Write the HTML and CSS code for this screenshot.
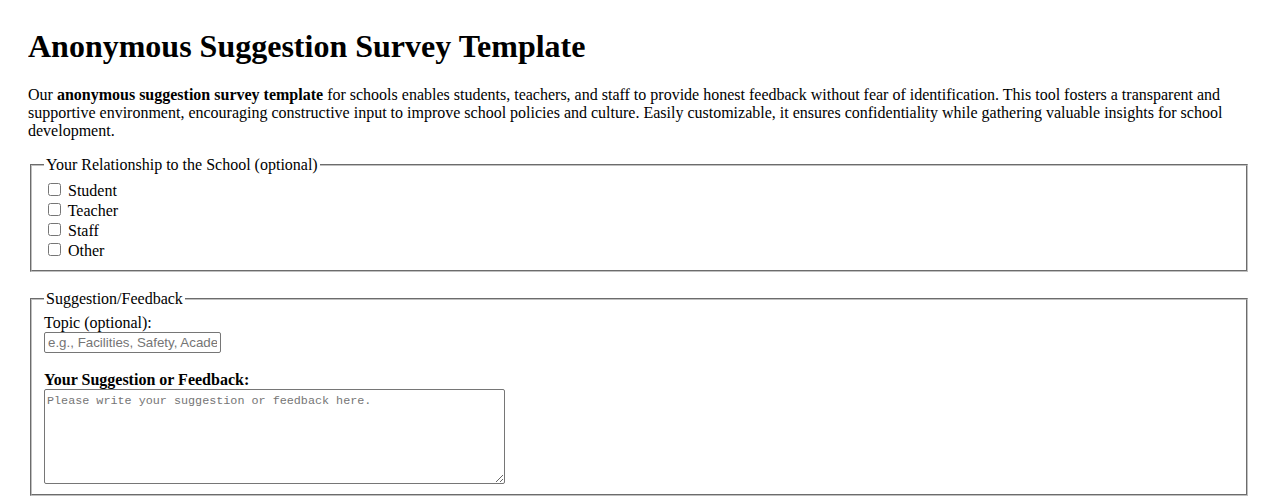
FILE: index.html
```html
<!DOCTYPE html>
<html lang="en">
<head>
<meta charset="utf-8">
<title>Anonymous Suggestion Survey Template</title>
<link rel="stylesheet" href="styles.css">
</head>
<body class="page">
<h1 class="title">Anonymous Suggestion Survey Template</h1>
<p class="intro">Our <strong>anonymous suggestion survey template</strong> for schools enables students, teachers, and staff to provide honest feedback without fear of identification. This tool fosters a transparent and supportive environment, encouraging constructive input to improve school policies and culture. Easily customizable, it ensures confidentiality while gathering valuable insights for school development.</p>
<form class="survey">
  <fieldset class="group">
    <legend class="group-legend">Your Relationship to the School (optional)</legend>
    <label class="check"><input type="checkbox" class="check-box" name="role" value="student"> Student</label><br>
    <label class="check"><input type="checkbox" class="check-box" name="role" value="teacher"> Teacher</label><br>
    <label class="check"><input type="checkbox" class="check-box" name="role" value="staff"> Staff</label><br>
    <label class="check"><input type="checkbox" class="check-box" name="role" value="other"> Other</label>
  </fieldset>
  <fieldset class="group group-feedback">
    <legend class="group-legend">Suggestion/Feedback</legend>
    <label class="field-label" for="topic">Topic (optional):</label><br>
    <input type="text" id="topic" class="text-input" placeholder="e.g., Facilities, Safety, Academics"><br><br>
    <label class="field-label field-label-strong" for="feedback">Your Suggestion or Feedback:</label><br>
    <textarea id="feedback" class="text-area" placeholder="Please write your suggestion or feedback here."></textarea>
  </fieldset>
</form>
</body>
</html>
```

FILE: styles.css
```css
.page {
  margin: 28px;
  font-family: "Liberation Serif", "Times New Roman", serif;
  font-size: 16px;
  color: #000;
  background: #fff;
}

.title {
  font-size: 32px;
  font-weight: bold;
  margin: 0 0 21px;
}

.intro {
  margin: 0 0 16px;
}

.survey {
  margin: 0;
}

.group {
  margin: 0 2px 18px;
  padding: 0.35em 0.75em 0.625em;
  border: 2px groove rgb(192, 192, 192);
}

.group-feedback {
  padding-top: 6px;
}

.group-legend {
  padding: 0 2px;
}

.check-box {
  margin: 3px 3px 3px 4px;
}

.field-label-strong {
  font-weight: bold;
}

.text-input {
  box-sizing: border-box;
  width: 177px;
  height: 21px;
  padding: 1px 3px;
  border: 1px solid #767676;
  border-radius: 2px;
  font-family: "Liberation Sans", Arial, sans-serif;
  font-size: 13.3333px;
}

.text-input::placeholder {
  color: #757575;
}

.text-area {
  box-sizing: border-box;
  width: 461px;
  height: 95px;
  padding: 3px 2px 2px;
  border: 1px solid #767676;
  border-radius: 2px;
  font-family: "Liberation Mono", "DejaVu Sans Mono", monospace;
  font-size: 11.75px;
  line-height: 16px;
  vertical-align: bottom;
}

.text-area::placeholder {
  color: #757575;
}
```
